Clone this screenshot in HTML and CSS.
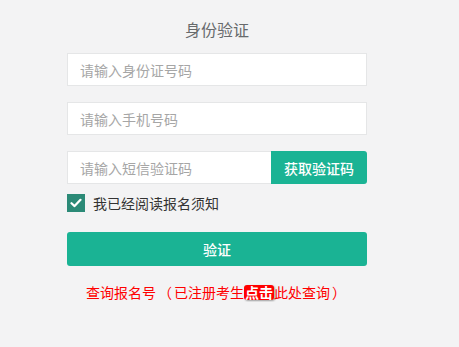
FILE: index.html
```html
<!DOCTYPE html>
<html lang="zh">
<head>
<meta charset="utf-8">
<title>身份验证</title>
<link rel="stylesheet" href="styles.css">
</head>
<body>
<div class="form">
  <h3 class="title">身份验证</h3>
  <div class="field"><input class="input" type="text" placeholder="请输入身份证号码"></div>
  <div class="field"><input class="input" type="text" placeholder="请输入手机号码"></div>
  <div class="field code-row">
    <input class="input code-input" type="text" placeholder="请输入短信验证码">
    <button class="code-btn" type="button">获取验证码</button>
  </div>
  <label class="agree">
    <span class="check"><svg width="12" height="10" viewBox="0 0 12 10"><path d="M1.5 5.2 L4.6 8.1 L10.5 1.8" fill="none" stroke="#fff" stroke-width="2.2" stroke-linecap="round" stroke-linejoin="round"/></svg></span>
    <span class="agree-text">我已经阅读报名须知</span>
  </label>
  <button class="submit" type="button">验证</button>
  <p class="query">查询报名号<span class="paren">（</span>已注册考生<span class="badge">点击</span>此处查询<span class="paren">）</span></p>
</div>
</body>
</html>
```
FILE: styles.css
```css
html, body {
  margin: 0;
  padding: 0;
  background: #f3f3f4;
  font-family: "Noto Sans CJK SC", "Noto Sans", sans-serif;
}
.form {
  width: 300px;
  margin-left: 67px;
  padding-top: 19px;
}
.title {
  margin: 0 0 14px;
  font-size: 16px;
  line-height: 20px;
  font-weight: normal;
  color: #676a6c;
  text-align: center;
}
.field {
  margin-bottom: 16px;
  height: 33px;
}
.input {
  box-sizing: border-box;
  width: 100%;
  height: 33px;
  border: 1px solid #e5e6e7;
  background: #fff;
  padding: 0 12px;
  font-family: inherit;
  font-size: 14px;
  color: #333;
  outline: none;
  margin: 0;
}
.input::placeholder {
  color: #a6a6a6;
}
.code-row {
  display: flex;
  margin-bottom: 0;
}
.code-input {
  flex: 1;
  width: auto;
  border-right: none;
}
.code-btn {
  width: 96px;
  height: 33px;
  margin: 0;
  border: none;
  border-radius: 0 3px 3px 0;
  background: #1ab394;
  color: #fff;
  font-family: inherit;
  font-size: 14px;
  font-weight: 500;
  padding: 0;
}
.agree {
  display: flex;
  align-items: center;
  margin-top: 10px;
  height: 18px;
}
.check {
  width: 18px;
  height: 18px;
  background: #2b8a77;
  display: flex;
  align-items: center;
  justify-content: center;
}
.agree-text {
  margin-left: 8px;
  font-size: 14px;
  color: #333;
  line-height: 18px;
}
.submit {
  display: block;
  box-sizing: border-box;
  width: 300px;
  height: 34px;
  margin-top: 20px;
  border: none;
  border-radius: 3px;
  background: #1ab394;
  color: #fff;
  font-family: inherit;
  font-size: 14px;
  font-weight: 500;
  padding: 0;
}
.query {
  margin: 16px 0 0;
  text-align: center;
  font-size: 14px;
  line-height: 20px;
  color: #ff0000;
}
.paren {
  padding: 0 2px;
}
.badge {
  display: inline-block;
  background: #f00;
  color: #fff;
  font-weight: bold;
  padding: 0 1px;
  line-height: 15px;
  border-radius: 3px;
  box-shadow: 1px 1px 2px rgba(0,0,0,0.35);
}
```
